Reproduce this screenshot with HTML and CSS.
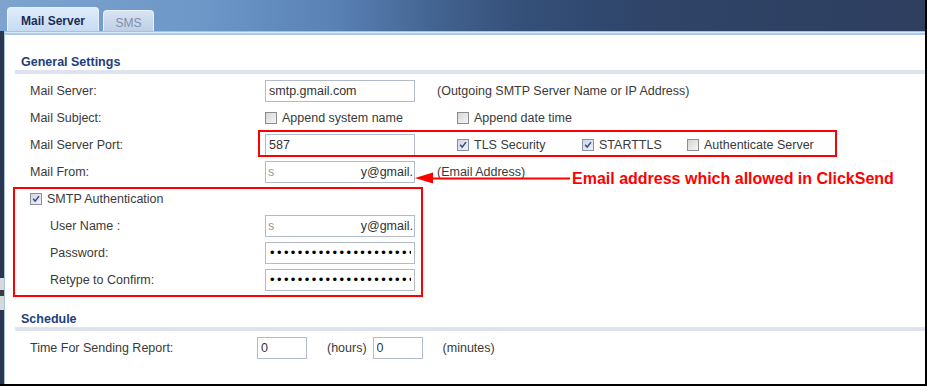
FILE: index.html
```html
<!DOCTYPE html>
<html lang="en">
<head>
  <meta charset="UTF-8">
  <title>Mail Server</title>
  <link rel="stylesheet" href="styles.css">
</head>
<body>
  <div class="window">
    <div class="tabbar">
      <div class="tab active">Mail Server</div>
      <div class="tab">SMS</div>
    </div>

    <div class="body">
      <div class="edge"><div class="thumb"></div></div>

      <div class="panel">
        <h2 class="section">General Settings</h2>
        <div class="rows">
          <div class="row">
            <span class="label">Mail Server:</span>
            <input class="text" type="text" value="smtp.gmail.com">
            <span class="hint">(Outgoing SMTP Server Name or IP Address)</span>
          </div>
          <div class="row">
            <span class="label">Mail Subject:</span>
            <span class="opt w192"><span class="cb"></span>Append system name</span>
            <span class="opt"><span class="cb"></span>Append date time</span>
          </div>
          <div class="row">
            <span class="label">Mail Server Port:</span>
            <span class="cell w192"><input class="text" type="text" value="587"></span>
            <span class="opt w125"><span class="cb on"><svg viewBox="0 0 12 12"><path d="M2.6 5.8 L5 8.6 L9.6 2.6"/></svg></span>TLS Security</span>
            <span class="opt w105"><span class="cb on"><svg viewBox="0 0 12 12"><path d="M2.6 5.8 L5 8.6 L9.6 2.6"/></svg></span>STARTTLS</span>
            <span class="opt"><span class="cb"></span>Authenticate Server</span>
          </div>
          <div class="row">
            <span class="label">Mail From:</span>
            <div class="text masked"><span class="head">s</span><span>y@gmail.</span></div>
            <span class="hint">(Email Address)</span>
          </div>

          <div class="row">
            <span class="opt"><span class="cb on"><svg viewBox="0 0 12 12"><path d="M2.6 5.8 L5 8.6 L9.6 2.6"/></svg></span>SMTP Authentication</span>
          </div>
          <div class="row">
            <span class="label sub">User Name :</span>
            <div class="text masked"><span class="head">s</span><span>y@gmail.</span></div>
          </div>
          <div class="row">
            <span class="label sub">Password:</span>
            <input class="text secret" type="password" value="xxxxxxxxxxxxxxxxxxxxxxxx">
          </div>
          <div class="row">
            <span class="label sub">Retype to Confirm:</span>
            <input class="text secret" type="password" value="xxxxxxxxxxxxxxxxxxxxxxxx">
          </div>
        </div>

        <h2 class="section schedule">Schedule</h2>
        <div class="rows">
          <div class="row">
            <span class="label narrow">Time For Sending Report:</span>
            <input class="text short" type="text" value="0">
            <span class="unit">(hours)</span>
            <input class="text short next" type="text" value="0">
            <span class="unit">(minutes)</span>
          </div>
        </div>
      </div>
    </div>

    <!-- annotations drawn over the screenshot -->
    <div class="mark port"></div>
    <div class="mark auth"></div>
    <svg class="arrow" viewBox="0 0 158 16" width="158" height="16">
      <path d="M2 8 L20 2.5 L20 13.5 Z"/>
      <line x1="18" y1="8.5" x2="157" y2="8.5"/>
    </svg>
    <div class="note">Email address which allowed in ClickSend</div>
  </div>
</body>
</html>
```

FILE: styles.css
```css
body {
  margin: 0;
  font-family: "Liberation Sans", Arial, sans-serif;
  font-size: 12.5px;
  color: #3a3a3a;
}
.window {
  position: relative;
  width: 927px;
  height: 386px;
  box-sizing: border-box;
  border-right: 2px solid #000;
  border-bottom: 2px solid #000;
  display: flex;
  flex-direction: column;
}
.tabbar {
  height: 31px;
  display: flex;
  align-items: flex-end;
  padding-left: 7px;
  background: linear-gradient(to right, #7ea3cf 0%, #6c97c7 22%, #5a82b5 36%, #41618e 48%, #344f78 57%, #2f4468 70%, #2e3f60 100%);
}
.tab {
  box-sizing: border-box;
  margin-right: 4px;
  border: 1px solid #e8f0fb;
  border-bottom: none;
  border-radius: 4px 4px 0 0;
  text-align: center;
}
.tab.active {
  width: 92px;
  height: 24px;
  padding-top: 3px;
  line-height: 20px;
  font-size: 12px;
  font-weight: bold;
  color: #1b2d55;
  background: linear-gradient(#e0ecfa, #c6dbf3);
}
.tab:not(.active) {
  width: 51px;
  height: 21px;
  padding-top: 4px;
  line-height: 16px;
  font-size: 12px;
  color: #7f90a8;
  background: linear-gradient(#d8e3f2, #bfcfe6);
}
.body {
  flex: 1;
  display: flex;
}
.edge {
  width: 4px;
  background: #2a3550;
}
.thumb {
  margin-top: 247px;
  height: 32px;
  background: linear-gradient(#d6d8dc 0 12px, #3d3d3d 12px 18px, #d6d8dc 18px);
}
.panel {
  flex: 1;
  border-left: 1px solid #aac4e6;
  padding-top: 4px;
  background: linear-gradient(#a4c2e8 0 1px, #dbe9fb 1px 2px, #a9c8ee 2px 4px, #fff 4px);
}
.section {
  margin: 19px 0 0 10px;
  padding-left: 6px;
  font-size: 12.5px;
  line-height: 16px;
  font-weight: bold;
  color: #21407e;
  border-bottom: 4px solid #dfe3ed;
}
.section.schedule {
  margin-top: 18px;
}
.rows {
  margin-top: 3px;
  padding-left: 25px;
}
.row {
  height: 27px;
  display: flex;
  align-items: center;
  white-space: nowrap;
}
.label {
  width: 235px;
  flex: none;
}
.label.sub {
  box-sizing: border-box;
  padding-left: 20px;
}
.label.narrow {
  width: 227px;
}
.text {
  box-sizing: border-box;
  width: 150px;
  height: 22px;
  margin: 0;
  padding: 0 3px;
  border: 1px solid #b3bac9;
  border-radius: 0;
  background: #fff;
  font: inherit;
  color: #333;
  outline: none;
}
.text.masked {
  display: flex;
  align-items: center;
  justify-content: space-between;
  overflow: hidden;
  padding: 0 1px 0 2px;
}
.masked .head {
  color: #999;
}
.text.secret {
  padding-left: 4px;
  font-size: 13px;
  letter-spacing: 2.4px;
  color: #000;
}
.text.short {
  width: 50px;
}
.text.next {
  margin-left: 6px;
}
.unit {
  margin-left: 20px;
}
.hint {
  margin-left: 22px;
}
.cell, .opt {
  display: flex;
  align-items: center;
  flex: none;
}
.opt {
  gap: 5px;
}
.w192 { width: 192px; }
.w125 { width: 125px; }
.w105 { width: 105px; }
.cb {
  box-sizing: border-box;
  width: 12px;
  height: 12px;
  border: 1px solid #8c8c8c;
  background: linear-gradient(135deg, #d6d6d6, #f4f4f4);
  display: inline-flex;
}
.cb.on {
  border-color: #8a90a0;
  background: linear-gradient(135deg, #d4d6e4, #eeeff6);
}
.cb svg {
  width: 10px;
  height: 10px;
}
.cb path {
  fill: none;
  stroke: #2e4a8a;
  stroke-width: 1.8;
}
.mark {
  position: absolute;
  box-sizing: border-box;
  border: 2px solid #f00;
}
.mark.port {
  left: 258px;
  top: 130px;
  width: 579px;
  height: 27px;
}
.mark.auth {
  left: 13px;
  top: 187px;
  width: 410px;
  height: 110px;
}
.arrow {
  position: absolute;
  left: 413px;
  top: 170px;
}
.arrow path {
  fill: #f00;
}
.arrow line {
  stroke: #f00;
  stroke-width: 2;
}
.note {
  position: absolute;
  left: 572px;
  top: 170px;
  font-size: 16px;
  line-height: 18px;
  font-weight: bold;
  color: #f00;
  white-space: nowrap;
}
```
